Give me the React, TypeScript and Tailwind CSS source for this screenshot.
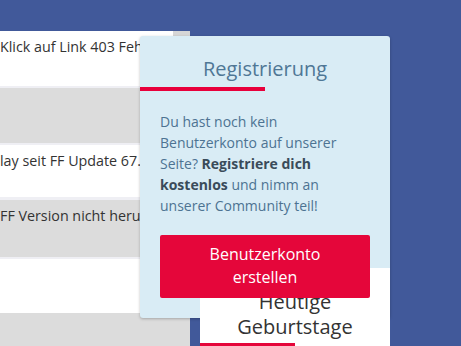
import React from "react";

const font = { fontFamily: '"Open Sans", "Noto Sans", sans-serif' };

function Row({ h, bg, text }: { h: number; bg: string; text?: string }) {
  return (
    <div className={`${bg} overflow-hidden`} style={{ height: h }}>
      {text && (
        <div className="whitespace-nowrap pt-[5px] text-[14.3px] leading-[22px] text-[#333333]">
          {text}
        </div>
      )}
    </div>
  );
}

export default function App() {
  return (
    <div className="relative h-[346px] w-[461px] overflow-hidden bg-[#41599a]" style={font}>
      <div className="h-[31px]" />
      <div className="flex gap-[10px]">
        <div className="flex w-[190px] flex-col">
          <div className="flex h-[55px]">
            <div className="w-[173px] bg-white">
              <div className="whitespace-nowrap pt-[5px] text-[14.3px] leading-[22px] text-[#333333]">
                Klick auf Link 403 Feh...
              </div>
            </div>
            <div className="w-[17px] bg-[#d6d6d6]" />
          </div>
          <div className="h-[2px] bg-[#efeff4]" />
          <Row h={55} bg="bg-[#dcdcdc]" />
          <div className="h-[2px] bg-[#efeff4]" />
          <Row h={52} bg="bg-white" text="lay seit FF Update 67..." />
          <div className="h-[3px] bg-[#efeff4]" />
          <Row h={57} bg="bg-[#dcdcdc]" text="FF Version nicht heru..." />
          <div className="h-[2px] bg-[#efeff4]" />
          <Row h={54} bg="bg-white" />
          <Row h={60} bg="bg-[#dcdcdc]" />
        </div>
        <div className="flex w-[190px] flex-col">
          <div className="h-[237px]" />
          <div className="relative z-[1] h-[100px] bg-white pt-[21px]">
            <div className="text-center text-[20px] leading-[25px] text-[#333333]">
              Heutige
              <br />
              Geburtstage
            </div>
            <div className="mt-[4px] h-[4px] w-[95px] bg-[#e5063a]" />
          </div>
        </div>
      </div>

      <div className="absolute left-[140px] top-[36px] h-[282px] w-[250px] rounded-[3px] bg-[#d9ecf5] shadow-[0_1px_3px_rgba(0,0,0,0.25)]">
        <div className="pt-[19px] text-center text-[20px] leading-[28px] text-[#4f7795]">
          Registrierung
        </div>
        <div className="mt-[4px] h-[4px] w-[125px] bg-[#e8003b]" />
        <div className="px-[20px] pt-[20px] text-[14px] leading-[21px] text-[#4d7392]">
          Du hast noch kein Benutzerkonto auf unserer Seite?{" "}
          <b className="font-bold text-[#3a4b5a]">Registriere dich kostenlos</b> und nimm an
          unserer Community teil!
        </div>
        <div className="px-[20px] pt-[19px]">
          <div className="relative z-[2] h-[63px] rounded-[2px] bg-[#e5063a] pt-[8px] text-center text-[16px] leading-[23px] text-white">
            Benutzerkonto
            <br />
            erstellen
          </div>
        </div>
      </div>
    </div>
  );
}
